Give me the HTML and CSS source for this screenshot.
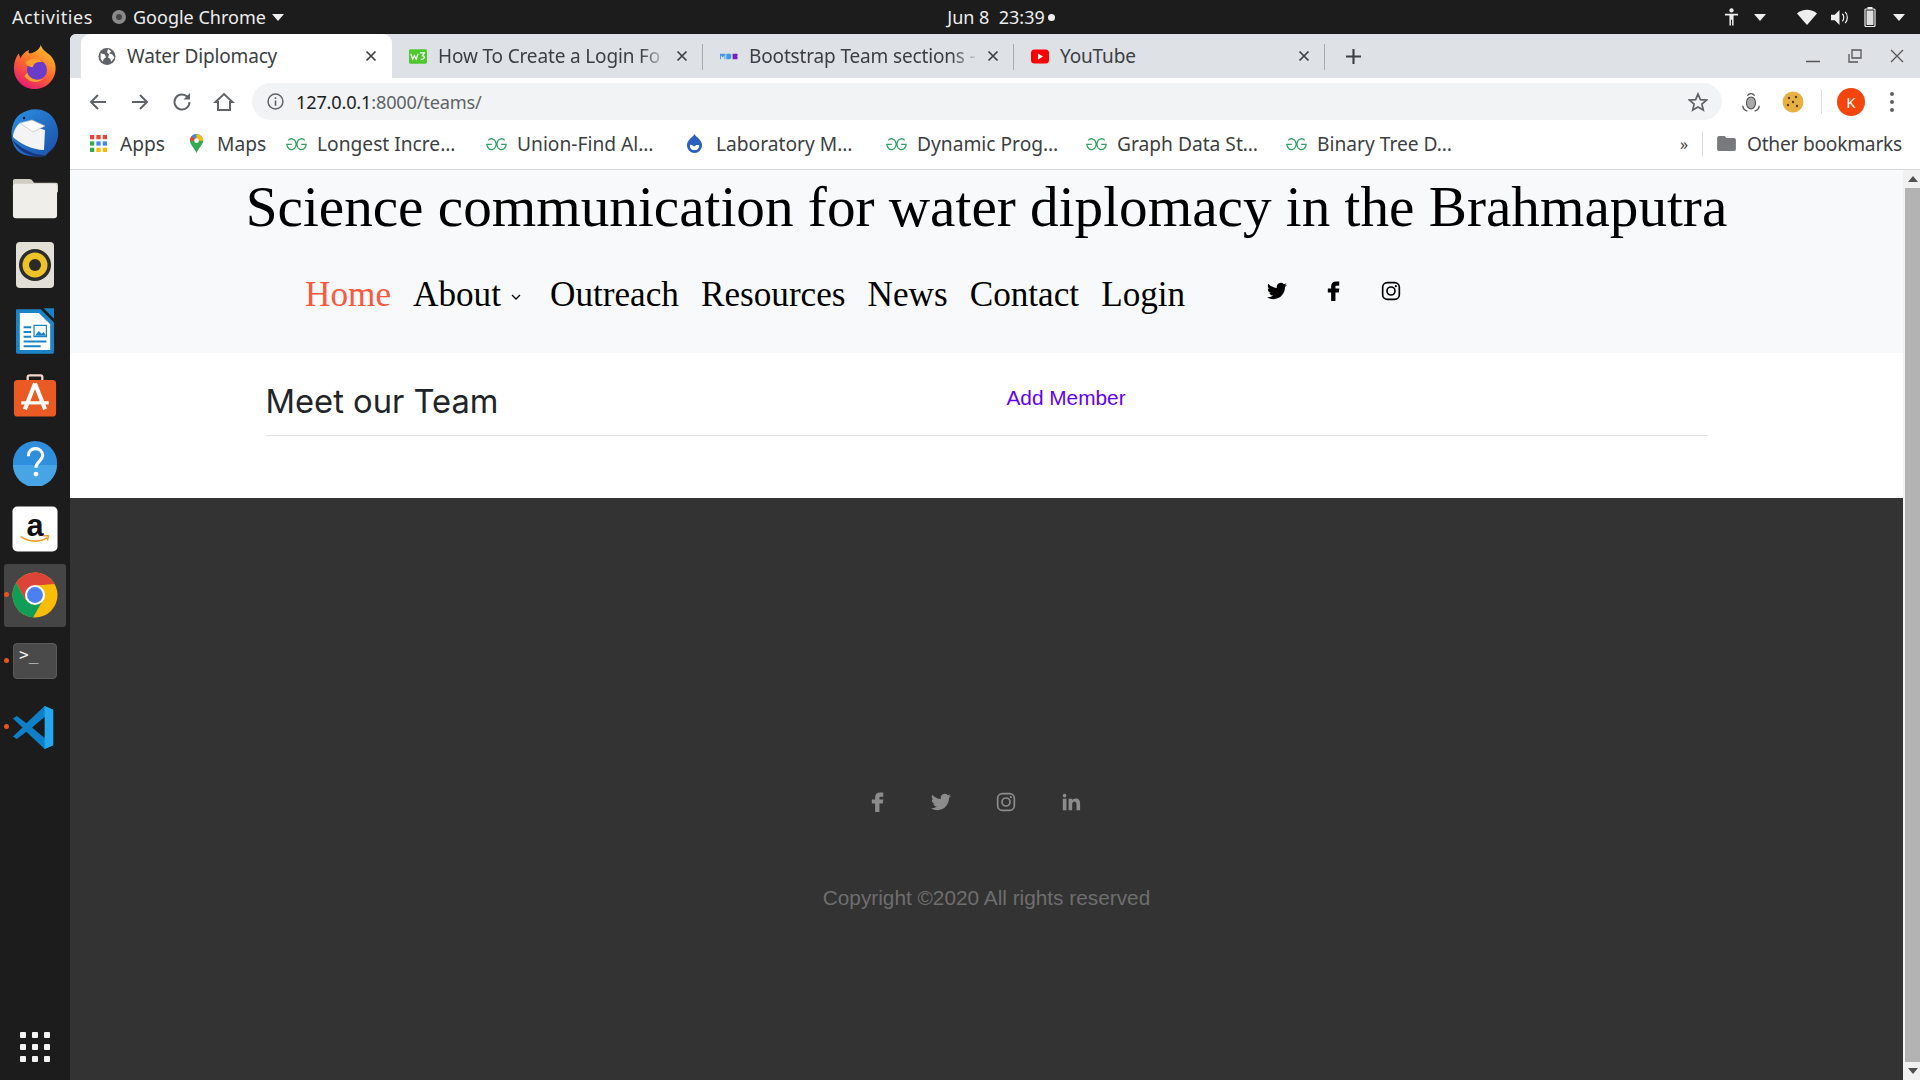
FILE: index.html
```html
<!DOCTYPE html>
<html lang="en">
<head>
<meta charset="utf-8">
<title>Water Diplomacy</title>
<link rel="stylesheet" href="styles.css">
</head>
<body>
<svg class="defs" width="0" height="0" aria-hidden="true">
  <symbol id="i-tw" viewBox="0 0 24 24"><path d="M23.953 4.57a10 10 0 01-2.825.775 4.958 4.958 0 002.163-2.723c-.951.555-2.005.959-3.127 1.184a4.92 4.92 0 00-8.384 4.482C7.69 8.095 4.067 6.13 1.64 3.162a4.822 4.822 0 00-.666 2.475c0 1.71.87 3.213 2.188 4.096a4.904 4.904 0 01-2.228-.616v.06a4.923 4.923 0 003.946 4.827 4.996 4.996 0 01-2.212.085 4.936 4.936 0 004.604 3.417 9.867 9.867 0 01-6.102 2.105c-.39 0-.779-.023-1.17-.067a13.995 13.995 0 007.557 2.209c9.053 0 13.998-7.496 13.998-13.985 0-.21 0-.42-.015-.63A9.935 9.935 0 0024 4.59z" fill="currentColor"/></symbol>
  <symbol id="i-fb" viewBox="2 3 21 21"><path d="M14.500 8H18V3.500h-3.500C11.500 3.500 9.500 5.500 9.500 8.500V11H6v4h3.500v9h4.500v-9h3.500l.6-4H14V9c0-.6.100-1 .5-1z" fill="currentColor"/></symbol>
  <symbol id="i-ig" viewBox="0 0 24 24"><g fill="none" stroke="currentColor" stroke-width="2"><rect x="2" y="2" width="20" height="20" rx="5.500"/><circle cx="12" cy="12" r="4.800"/></g><circle cx="17.800" cy="6.200" r="1.300" fill="currentColor"/></symbol>
  <symbol id="i-in" viewBox="1 1 22 22"><path d="M6.940 5a2 2 0 1 1-4-.002 2 2 0 0 1 4 .002zM7 8.480H3V21h4V8.480zm6.320 0H9.340V21h3.940v-6.570c0-3.660 4.770-4 4.770 0V21H22v-7.930c0-6.170-7.060-5.940-8.720-2.910l.040-1.680z" fill="currentColor"/></symbol>
  <symbol id="i-gg" viewBox="0 0 20 12"><path d="M14.500 6.300H19.200A4.400 5.200 0 1 1 17.800 2.400M5.500 6.300H.8A4.400 5.200 0 1 0 2.200 2.400" fill="none" stroke="#2da160" stroke-width="1.200"/></symbol>
  <symbol id="i-x" viewBox="0 0 12 12"><path d="M1.500 1.500l9 9m0-9l-9 9" stroke="#3c4043" stroke-width="1.700" fill="none"/></symbol>
</svg>

<header class="topbar">
  <div class="topbar-left">
    <span class="activities">Activities</span>
    <span class="app-menu">
      <svg class="app-icon" viewBox="0 0 16 16"><circle cx="8" cy="8" r="7" fill="#8a8a8a"/><circle cx="8" cy="8" r="3" fill="#444"/></svg>
      Google Chrome
      <i class="caret"></i>
    </span>
  </div>
  <div class="clock"><span>Jun 8&nbsp;&nbsp;23:39</span><i class="clock-dot"></i></div>
  <div class="tray">
    <svg class="tray-a" viewBox="0 0 16 20"><circle cx="8" cy="3" r="2.300" fill="#eee"/><path d="M1 6.500h14v1.800h-4.800V19H8.600v-6H7.400v6H5.800V8.300H1z" fill="#eee"/></svg>
    <i class="caret caret-a"></i>
    <svg class="tray-w" viewBox="0 0 20 16"><path d="M0 4.500C5.500-.5 14.500-.5 20 4.500L10 16z" fill="#eee"/></svg>
    <svg class="tray-v" viewBox="0 0 20 18"><path d="M1 6h4l5-5v16l-5-5H1z" fill="#eee"/><path d="M13 5c2 2 2 6 0 8M16 3c3 3 3 9 0 12" stroke="#eee" stroke-width="1.300" fill="none"/></svg>
    <svg class="tray-b" viewBox="0 0 12 20"><rect x="3.500" y="0" width="5" height="2" fill="#eee"/><rect x="1" y="2" width="10" height="17.500" rx="1" fill="none" stroke="#eee" stroke-width="1.200"/><rect x="2.500" y="3.500" width="7" height="14.500" fill="#ddd"/></svg>
    <i class="caret caret-b"></i>
  </div>
</header>

<div class="desktop">
  <nav class="dock">
    <div class="dock-item">
      <svg class="dock-icon" viewBox="0 0 48 48"><defs><linearGradient id="ff" x1="0.800" y1="0" x2="0.200" y2="1"><stop offset="0" stop-color="#ffc62e"/><stop offset="0.500" stop-color="#ff6a2b"/><stop offset="1" stop-color="#e5127a"/></linearGradient></defs><path d="M30 1c2 6 6 7 11 12 5 6 5 13 4 17-2 10-11 17-21 17C11 47 2 37 2 25c0-6 2-11 5-15l2 5c1-3 4-7 9-9-1 2-1 3 0 4 5-1 10-3 12-9z" fill="url(#ff)"/><circle cx="26" cy="27" r="10.500" fill="#6a3cc9"/><path d="M14 20c4-6 14-6 18-1-5-1-10 1-10 5-3 0-6-1-8-4zM16 30c2 7 11 9 17 6-6 6-16 4-20-3z" fill="#ffa02c"/></svg>
    </div>
    <div class="dock-item">
      <svg class="dock-icon dock-tall" viewBox="0 0 48 48"><defs><linearGradient id="tb" x1="0" y1="0" x2="1" y2="1"><stop offset="0" stop-color="#2c8fe0"/><stop offset="1" stop-color="#1b4fa8"/></linearGradient></defs><path d="M8 6C20-3 36-1 43 10c7 11 5 26-5 33l-4 4c-6 1-20 1-26-4C-2 35-2 15 8 6z" fill="url(#tb)"/><path d="M9 14l25 7-1 20C21 41 8 34 2 28c0-5 3-11 7-14z" fill="#f4f4f6"/><path d="M9 14l13 9 12-6-13-6z" fill="#fff" stroke="#b9bdc6" stroke-width=".7"/><path d="M1 30c8 10 24 17 34 16-12 4-28-2-34-16z" fill="#17337a"/><circle cx="13" cy="9" r="1.200" fill="#123"/></svg>
    </div>
    <div class="dock-item">
      <svg class="dock-icon" viewBox="0 0 48 42"><path d="M3 0h15c2 0 3 1 5 4h23a2 2 0 0 1 2 2v8H1V2a2 2 0 0 1 2-2z" fill="#cfccc4"/><rect x="1" y="5" width="46" height="36" rx="3" fill="#efeeeb"/></svg>
    </div>
    <div class="dock-item">
      <svg class="dock-icon dock-rb" viewBox="0 0 38 46"><rect width="38" height="46" rx="4" fill="#e2dfd6"/><circle cx="19" cy="23" r="16" fill="#2c2c2c"/><circle cx="19" cy="23" r="12.500" fill="#eec32a"/><circle cx="19" cy="23" r="6" fill="#2a2a2a"/></svg>
    </div>
    <div class="dock-item">
      <svg class="dock-icon dock-rb" viewBox="0 0 40 48"><path d="M1 1h25l14 14v31a2 2 0 0 1-2 2H2a2 2 0 0 1-2-2V2a1 1 0 0 1 1-1z" fill="#1b83c6"/><path d="M4 5h20l12 12v27H4z" fill="#fff"/><path d="M29 0h11v11z" fill="#1b83c6"/><path d="M8 19h8v2H8zM8 24h8v2H8zM8 29h8v2H8zM8 34h24v2H8zM8 39h18v2H8z" fill="#1b83c6"/><path d="M19 18h13v12H19z" fill="none" stroke="#1b83c6" stroke-width="1.300"/><path d="M20 29l4-5 3 3 2-2 3 4z" fill="#1b83c6"/></svg>
    </div>
    <div class="dock-item">
      <svg class="dock-sw" viewBox="0 0 48 46"><path d="M16 7V3a2 2 0 0 1 2-2h12a2 2 0 0 1 2 2v4" fill="none" stroke="#f1d9cf" stroke-width="2.500"/><rect x="1" y="6" width="46" height="40" rx="4" fill="#ea5a25"/><path d="M24 10L13 38M24 10l11 28" stroke="#fff" stroke-width="4.500" fill="none"/><path d="M9 31h30" stroke="#fff" stroke-width="3.500"/></svg>
    </div>
    <div class="dock-item">
      <svg class="dock-icon" viewBox="0 0 48 48"><circle cx="24" cy="24" r="23" fill="#2f8fdc"/><path d="M1 26h46a23 23 0 0 1-46 0z" fill="#47a5e5"/><path d="M17 17c0-11 15-10 15-1 0 6-7 6-7 13" fill="none" stroke="#fff" stroke-width="3.200"/><circle cx="25" cy="35.500" r="2.500" fill="#fff"/></svg>
    </div>
    <div class="dock-item">
      <svg class="dock-icon" viewBox="0 0 48 48"><rect x=".5" y=".5" width="47" height="47" rx="5" fill="#fff"/><text x="24" y="31" class="amz">a</text><path d="M9 32c9 6 20 6 28 1" fill="none" stroke="#f39c1f" stroke-width="1.700"/><path d="M33 31h5l-1 5" fill="none" stroke="#f39c1f" stroke-width="1.500"/></svg>
    </div>
    <div class="dock-item active-app">
      <i class="run-dot"></i>
      <svg class="dock-icon" viewBox="0 0 48 48"><circle cx="24" cy="24" r="23.500" fill="#fbbc05"/><path d="M44.400 12.500A23.500 23.500 0 0 0 4.300 11.300L14 29l10-15z" fill="#db4437"/><path d="M4.300 11.300A23.500 23.500 0 0 0 22 47.400L32.500 29 14 29z" fill="#109d58"/><circle cx="24" cy="24" r="10.500" fill="#fff"/><circle cx="24" cy="24" r="8.300" fill="#4a80f0"/></svg>
    </div>
    <div class="dock-item">
      <i class="run-dot"></i>
      <div class="term"><span>&gt;_</span></div>
    </div>
    <div class="dock-item">
      <i class="run-dot"></i>
      <svg class="dock-icon" viewBox="0 0 48 48"><path d="M34 2L15 20 5 12.500 1 15l10 9.500L1 34l4 2.500L15 29l19 18 9-4V6z" fill="#0f7fc8"/><path d="M34 2l9 4v37l-9 4z" fill="#25a7ee"/><path d="M34 13.500L21 24.500 34 35.500z" fill="#1a1a1a"/></svg>
    </div>
    <div class="dock-spacer"></div>
    <div class="show-apps"><i></i><i></i><i></i><i></i><i></i><i></i><i></i><i></i><i></i></div>
  </nav>

  <main class="browser">
    <div class="tabstrip">
      <div class="tab tab-active">
        <svg class="fav" viewBox="0 0 16 16"><circle cx="8" cy="8" r="8" fill="#5f6368"/><path d="M2 5l4 1 1 3-2 1-1 3-2-3zM9 1l3 2-2 2 3 1 2 3-3 4-1-3-2-1 1-3-2-2z" fill="#fff"/></svg>
        <span class="tab-title">Water Diplomacy</span>
        <svg class="tab-x"><use href="#i-x"/></svg>
      </div>
      <div class="tab">
        <svg class="fav" viewBox="0 0 20 16"><rect width="20" height="16" rx="1.500" fill="#4cc92c"/><path d="M2 5l2 6 2-4 2 4 2-6M12 4h5l-2 3c3 0 3 5-2 4" stroke="#fff" stroke-width="1.400" fill="none"/></svg>
        <span class="tab-title fade">How To Create a Login Fo</span>
        <svg class="tab-x"><use href="#i-x"/></svg>
        <i class="tab-sep"></i>
      </div>
      <div class="tab">
        <svg class="fav" viewBox="0 0 20 16"><path d="M0 5h6v6H5V7L3 9 1 7v4H0z" fill="#3d9ae8"/><path d="M7 5h4c2 0 2 6 0 6H7z" fill="#3d9ae8"/><path d="M14 5h5c1 1 1 2 0 3 1 1 1 2 0 3h-5z" fill="#7a1fc4"/></svg>
        <span class="tab-title fade">Bootstrap Team sections -</span>
        <svg class="tab-x"><use href="#i-x"/></svg>
        <i class="tab-sep"></i>
      </div>
      <div class="tab">
        <svg class="fav" viewBox="0 0 18 14"><rect width="18" height="14" rx="3.500" fill="#f00"/><path d="M7 4l5 3-5 3z" fill="#fff"/></svg>
        <span class="tab-title">YouTube</span>
        <svg class="tab-x"><use href="#i-x"/></svg>
        <i class="tab-sep"></i>
      </div>
      <svg class="new-tab" viewBox="0 0 14 14"><path d="M7 0v14M0 7h14" stroke="#3c4043" stroke-width="2"/></svg>
      <div class="win-controls">
        <svg viewBox="0 0 14 14"><path d="M0 12.500h14" stroke="#555" stroke-width="1.500"/></svg>
        <svg viewBox="0 0 14 14"><path d="M4 1h9v8H4zM1 5v8h9" fill="none" stroke="#555" stroke-width="1.300"/></svg>
        <svg viewBox="0 0 14 14"><path d="M1 1l12 12m0-12L1 13" stroke="#555" stroke-width="1.300"/></svg>
      </div>
    </div>

    <div class="toolbar">
      <svg class="tb-icon" viewBox="0 0 24 24"><path d="M20 12H5m7-7l-7 7 7 7" fill="none" stroke="#5f6368" stroke-width="2"/></svg>
      <svg class="tb-icon" viewBox="0 0 24 24"><path d="M4 12h15m-7-7l7 7-7 7" fill="none" stroke="#5f6368" stroke-width="2"/></svg>
      <svg class="tb-icon" viewBox="0 0 24 24"><path d="M19.500 12a7.500 7.500 0 1 1-2.200-5.300" fill="none" stroke="#5f6368" stroke-width="2"/><path d="M20 3v6.500h-6.500z" fill="#5f6368"/></svg>
      <svg class="tb-icon" viewBox="0 0 24 24"><path d="M3.500 12L12 4l8.500 8H18v8H6v-8z" fill="none" stroke="#5f6368" stroke-width="2"/></svg>
      <div class="omnibox">
        <svg class="info" viewBox="0 0 16 16"><circle cx="8" cy="8" r="7" fill="none" stroke="#5f6368" stroke-width="1.400"/><path d="M8 7v5M8 4v1.600" stroke="#5f6368" stroke-width="1.500"/></svg>
        <span class="url"><b>127.0.0.1</b>:8000/teams/</span>
        <svg class="star" viewBox="0 0 20 20"><path d="M10 2l2.400 5.600 6.100.5-4.600 4 1.400 6L10 15l-5.300 3.100 1.400-6-4.600-4 6.100-.5z" fill="none" stroke="#5f6368" stroke-width="1.700"/></svg>
      </div>
      <svg class="ext ext-eye" viewBox="0 0 22 24"><path d="M7 5c2-3 6-3 8 0M2 16c0 3 2 5 5 6M20 16c0 3-2 5-5 6" fill="none" stroke="#555" stroke-width="1.500"/><ellipse cx="11" cy="13" rx="5" ry="6.500" fill="#aaa" stroke="#555" stroke-width="1.300"/></svg>
      <svg class="ext ext-cookie" viewBox="0 0 22 22"><circle cx="11" cy="11" r="10.500" fill="#e6b042"/><g fill="#5a3a12"><circle cx="7" cy="7" r="1.200"/><circle cx="14" cy="6" r="1.200"/><circle cx="11" cy="11" r="1.200"/><circle cx="6" cy="14" r="1.200"/><circle cx="15" cy="15" r="1.200"/></g></svg>
      <i class="tb-sep"></i>
      <div class="avatar">K</div>
      <div class="kebab"><i></i><i></i><i></i></div>
    </div>

    <div class="bookmarks">
      <div class="bm bm-apps">
        <svg class="bm-icon" viewBox="0 0 16 16"><g fill="#ea4335"><rect width="4" height="4"/><rect x="6" width="4" height="4"/><rect x="12" width="4" height="4"/></g><g fill="#4285f4"><rect x="6" y="6" width="4" height="4"/><rect x="12" y="6" width="4" height="4"/></g><rect y="6" width="4" height="4" fill="#34a853"/><g fill="#fbbc05"><rect x="6" y="12" width="4" height="4"/><rect x="12" y="12" width="4" height="4"/></g><rect y="12" width="4" height="4" fill="#34a853"/></svg>
        <span>Apps</span>
      </div>
      <div class="bm bm-maps">
        <svg class="bm-icon" viewBox="0 0 14 20"><path d="M7 0a7 7 0 0 1 7 7c0 4-5 8-7 13C5 15 0 11 0 7a7 7 0 0 1 7-7z" fill="#34a853"/><path d="M2 2a7 7 0 0 1 5-2v7z" fill="#4285f4"/><path d="M7 0a7 7 0 0 1 7 7H7z" fill="#fbbc05"/><path d="M0 7a7 7 0 0 1 2-5l5 5z" fill="#ea4335"/><circle cx="7" cy="7" r="2.500" fill="#fff"/></svg>
        <span>Maps</span>
      </div>
      <div class="bm bm-fixed"><svg class="bm-gg"><use href="#i-gg"/></svg><span>Longest Incre…</span></div>
      <div class="bm bm-fixed"><svg class="bm-gg"><use href="#i-gg"/></svg><span>Union-Find Al…</span></div>
      <div class="bm bm-fixed">
        <svg class="bm-icon" viewBox="0 0 18 20"><path d="M9 0c1 3 8 6 8 12a8 8 0 0 1-16 0C1 6 8 3 9 0z" fill="#2a5fc0"/><path d="M4 12c2-2 4 2 5 1s3-2 5-1c0 3-2 5-5 5s-5-2-5-5z" fill="#fff"/></svg>
        <span>Laboratory M…</span>
      </div>
      <div class="bm bm-fixed"><svg class="bm-gg"><use href="#i-gg"/></svg><span>Dynamic Prog…</span></div>
      <div class="bm bm-fixed"><svg class="bm-gg"><use href="#i-gg"/></svg><span>Graph Data St…</span></div>
      <div class="bm bm-fixed"><svg class="bm-gg"><use href="#i-gg"/></svg><span>Binary Tree D…</span></div>
      <div class="bm-end">
        <span class="more">»</span>
        <i class="bm-sep"></i>
        <svg class="bm-folder" viewBox="0 0 20 16"><path d="M2 0h6l2 2h8a2 2 0 0 1 2 2v10a2 2 0 0 1-2 2H2a2 2 0 0 1-2-2V2a2 2 0 0 1 2-2z" fill="#77797c"/></svg>
        <span>Other bookmarks</span>
      </div>
    </div>

    <div class="viewport">
      <div class="page">
        <section class="site-header">
          <h1 class="site-title">Science communication for water diplomacy in the Brahmaputra</h1>
          <div class="site-nav">
            <a class="nav-link current">Home</a>
            <a class="nav-link">About <svg class="chev" viewBox="0 0 10 6"><path d="M1 1l4 4 4-4" fill="none" stroke="#000" stroke-width="1.300"/></svg></a>
            <a class="nav-link">Outreach</a>
            <a class="nav-link">Resources</a>
            <a class="nav-link">News</a>
            <a class="nav-link">Contact</a>
            <a class="nav-link">Login</a>
            <div class="nav-social">
              <svg><use href="#i-tw"/></svg>
              <svg><use href="#i-fb"/></svg>
              <svg><use href="#i-ig"/></svg>
            </div>
          </div>
        </section>
        <section class="team">
          <div class="team-head">
            <h2 class="team-title">Meet our Team</h2>
            <div class="team-action"><a class="add-member">Add Member</a></div>
          </div>
        </section>
        <footer class="site-footer">
          <div class="foot-social">
            <svg><use href="#i-fb"/></svg>
            <svg><use href="#i-tw"/></svg>
            <svg><use href="#i-ig"/></svg>
            <svg><use href="#i-in"/></svg>
          </div>
          <p class="copyright">Copyright ©2020 All rights reserved</p>
        </footer>
      </div>
      <div class="scrollbar">
        <i class="sb-up"></i>
        <div class="sb-thumb"></div>
        <i class="sb-down"></i>
      </div>
    </div>
  </main>
</div>
</body>
</html>
```

FILE: styles.css
```css
* { box-sizing: border-box; }
html, body { margin: 0; padding: 0; height: 1080px; overflow: hidden; }
body { display: flex; flex-direction: column; background: #1c1c1c; font-family: "Noto Sans", sans-serif; }
.defs { position: absolute; }
i { display: block; }

/* GNOME top bar */
.topbar { height: 34px; flex: none; background: #1c1c1c; color: #eee; font-size: 18px; display: grid; grid-template-columns: 1fr auto 1fr; align-items: center; padding: 0 12px; }
.topbar-left { display: flex; align-items: center; gap: 18px; }
.activities { letter-spacing: .6px; }
.app-menu { display: flex; align-items: center; gap: 6px; }
.app-icon { width: 16px; height: 16px; }
.caret { width: 0; height: 0; border-left: 6px solid transparent; border-right: 6px solid transparent; border-top: 7px solid #eee; }
.clock { display: flex; align-items: center; gap: 3px; margin-left: 82px; font-size: 18px; }
.clock-dot { width: 7px; height: 7px; border-radius: 50%; background: #eee; }
.tray { display: flex; justify-content: flex-end; align-items: center; }
.tray-a { width: 15px; height: 20px; margin-right: 15px; }
.caret-a { margin-right: 31px; }
.tray-w { width: 20px; height: 16px; margin-right: 13px; }
.tray-v { width: 19px; height: 17px; margin-right: 15px; }
.tray-b { width: 12px; height: 20px; margin-right: 17px; }
.caret-b { margin-right: 3px; }

.desktop { flex: 1; display: flex; min-height: 0; }

/* Dock */
.dock { width: 70px; flex: none; background: #1c1c1c; display: flex; flex-direction: column; align-items: center; }
.dock-item { width: 62px; height: 66px; flex: none; display: flex; align-items: center; justify-content: center; position: relative; }
.dock-icon { width: 46px; height: 46px; }
.dock-tall { width: 48px; height: 48px; }
.dock-rb { height: 46px; width: 38px; }
.dock-sw { width: 44px; height: 43px; margin-top: -4px; }
.active-app { background: #454545; border-radius: 3px; height: 63px; margin: 1.5px 0; }
.run-dot { position: absolute; left: 0; top: 50%; margin-top: -3px; width: 5px; height: 5px; border-radius: 50%; background: #e95420; }
.term { width: 44px; height: 36px; background: #4a4a4a; border: 1px solid #5a5a5a; border-radius: 4px; color: #f0f0f0; font: 16px/1 "DejaVu Sans Mono", monospace; padding: 3px 0 0 5px; }
.amz { font: bold 32px "Liberation Sans", sans-serif; text-anchor: middle; fill: #111; }
.dock-spacer { flex: 1; }
.show-apps { display: grid; grid-template-columns: repeat(3, 6px); gap: 6px; margin-bottom: 18px; }
.show-apps i { width: 6px; height: 6px; background: #f4f4f4; border-radius: 1px; }

/* Browser */
.browser { flex: 1; min-width: 0; display: flex; flex-direction: column; background: #fff; border-radius: 6px 0 0 0; overflow: hidden; }
.tabstrip { height: 44px; flex: none; background: #dee1e6; display: flex; align-items: stretch; padding-left: 11px; color: #3c4043; font-size: 19px; }
.tab { width: 311px; flex: none; display: flex; align-items: center; padding: 0 15px 0 14px; position: relative; }
.tab-active { background: #fff; border-radius: 9px 9px 0 0; }
.fav { width: 18px; height: 17px; margin: 0 11px 0 3px; flex: none; }
.tab-title { flex: 1; min-width: 0; white-space: nowrap; letter-spacing: -.15px; }
.fade { -webkit-mask-image: linear-gradient(90deg, #000 88%, transparent 100%); mask-image: linear-gradient(90deg, #000 88%, transparent 100%); }
.tab-x { width: 12px; height: 12px; flex: none; margin-left: 8px; }
.tab-sep { position: absolute; right: 0; top: 10px; bottom: 8px; width: 1px; background: #a8abb0; }
.new-tab { width: 15px; height: 15px; align-self: center; margin-left: 21px; }
.win-controls { margin-left: auto; display: flex; align-items: center; gap: 28px; padding-right: 16px; }
.win-controls svg { width: 14px; height: 14px; }

.toolbar { height: 47px; flex: none; display: flex; align-items: center; padding: 0 0 0 16px; background: #fff; }
.tb-icon { width: 24px; height: 24px; margin-right: 18px; flex: none; }
.tb-icon:nth-child(4) { margin-right: 16px; }
.omnibox { width: 1470px; height: 37px; flex: none; background: #f1f3f4; border-radius: 19px; display: flex; align-items: center; padding: 0 14px 0 15px; font-size: 18.200px; color: #5f6368; }
.info { width: 17px; height: 17px; margin-right: 12px; }
.url { flex: 1; letter-spacing: -.2px; }
.url b { font-weight: 400; color: #202124; }
.star { width: 20px; height: 20px; }
.ext { flex: none; }
.ext-eye { width: 20px; height: 22px; margin-left: 19px; }
.ext-cookie { width: 22px; height: 22px; margin-left: 21px; }
.tb-sep { width: 1px; height: 24px; background: #dadce0; margin-left: 17px; }
.avatar { width: 28px; height: 28px; border-radius: 50%; background: #f4450c; color: #fff; font-size: 15px; display: flex; align-items: center; justify-content: center; margin-left: 15px; }
.kebab { display: flex; flex-direction: column; gap: 4px; margin-left: 25px; }
.kebab i { width: 4px; height: 4px; border-radius: 50%; background: #5f6368; }

.bookmarks { height: 37px; flex: none; display: flex; align-items: center; padding: 0 0 7px 20px; border-bottom: 1px solid #d6d8dc; color: #3c4043; font-size: 19.200px; box-sizing: content-box; }
.bm { display: flex; align-items: center; white-space: nowrap; flex: none; }
.bm-apps { width: 96px; }
.bm-maps { width: 100px; }
.bm-fixed { width: 200px; }
.bm-icon { width: 17px; height: 19px; margin-right: 13px; flex: none; }
.bm-maps .bm-icon { margin-right: 12px; margin-left: 2px; }
.bm-gg { width: 21px; height: 14px; margin-right: 10px; flex: none; }
.bm-end { margin-left: auto; display: flex; align-items: center; padding-right: 18px; letter-spacing: -.25px; }
.more { font-size: 16px; margin-right: 14px; }
.bm-sep { width: 1px; height: 24px; background: #d6d8dc; margin-right: 14px; }
.bm-folder { width: 19px; height: 15px; margin-right: 11px; }

.viewport { flex: 1; min-height: 0; display: flex; }
.page { flex: 1; min-width: 0; display: flex; flex-direction: column; background: #fff; font-family: "Liberation Serif", serif; }

.site-header { height: 183px; background: #f8f9fa; display: flex; flex-direction: column; flex: none; }
.site-title { margin: 0; padding-top: 5px; font-weight: 400; font-size: 57.200px; line-height: 64px; text-align: center; color: #000; }
.site-nav { display: flex; align-items: center; gap: 22px; padding: 33px 0 0 235px; font-size: 35.200px; line-height: 46px; color: #000; }
.nav-link { white-space: nowrap; display: flex; align-items: center; }
.current { color: #f8593f; }
.chev { width: 10px; height: 6px; margin: 4px 7px 0 10px; }
.nav-social { display: flex; align-items: center; gap: 37px; margin-left: 60px; margin-top: -9px; }
.nav-social svg { width: 20px; height: 20px; }

.team { height: 145px; flex: none; background: #fff; }
.team-head { width: 1442px; height: 83px; margin: 0 auto; border-bottom: 1px solid #dee2e6; display: flex; align-items: flex-start; }
.team-title { width: 50%; margin: 0; padding-top: 27px; font: 400 32.700px/42px "Inter", sans-serif; color: #212529; }
.team-action { width: 50%; padding: 30px 0 0 20px; }
.add-member { font: 20.800px/30px "Liberation Sans", sans-serif; color: #6200ff; }

.site-footer { flex: 1; background: #333; display: flex; flex-direction: column; align-items: center; }
.foot-social { display: flex; align-items: center; justify-content: center; margin-top: 294px; color: #8c8c8c; width: 100%; padding-right: 26px; gap: 45px; }
.foot-social svg { width: 20px; height: 20px; }
.foot-social svg:first-child { margin: 0 -2px 0 2px; }
.copyright { margin: 72px 0 0; font: 20.800px/28px "Liberation Sans", sans-serif; color: #6e6e6e; }

.scrollbar { width: 17px; flex: none; background: #f1f1f1; display: flex; flex-direction: column; align-items: center; padding-left: 2px; }
.sb-up, .sb-down { width: 0; height: 0; border-left: 5px solid transparent; border-right: 5px solid transparent; margin: 6px 0; flex: none; }
.sb-up { border-bottom: 6px solid #505050; }
.sb-down { border-top: 6px solid #505050; }
.sb-thumb { flex: 1; width: 15px; background: #b3b3b3; }
```
